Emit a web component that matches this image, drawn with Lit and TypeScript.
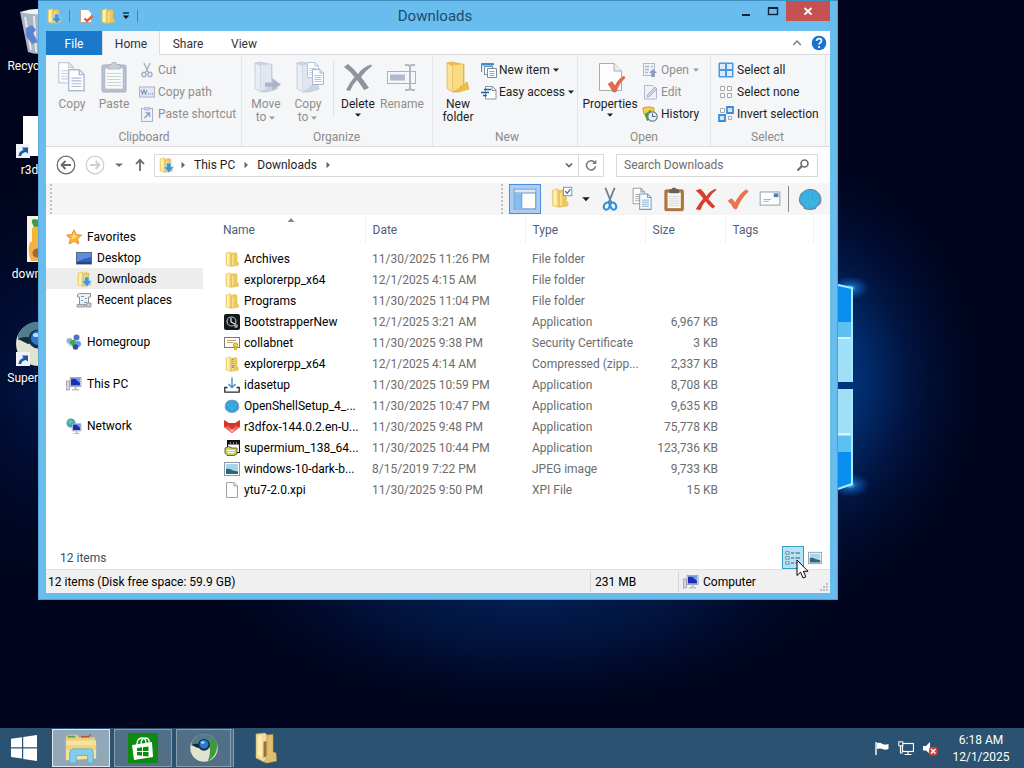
import { LitElement, html, svg, css, nothing, TemplateResult } from "lit";
import { customElement } from "lit/decorators.js";
import { classMap } from "lit/directives/class-map.js";

type Glyph = TemplateResult;

const folderShape = svg`
  <path d="M2 2 L6 .8 L7 1.6 V14.6 L6 15.4 L2 14Z" fill="#f3d877" stroke="#e3c565" stroke-width=".5"/>
  <path d="M7 2.4 L10.5 1.6 L13 2.2 V11 L14.4 11.4 V14.2 L7 15.4Z" fill="#ecc95c" stroke="#dcb750" stroke-width=".5"/>
  <path d="M3 2.6 L5.4 1.8 V14.2 L3 13.4Z" fill="#fdf1b5"/>
  <path d="M8 5 L9.6 3.2 V13.6 L8 14.4Z" fill="#f9e08a"/>`;

const openFolder = (a: string, b: string, c: string) => svg`
  <path d="M5 2 L10 1 L22 3.5 V24 L19 27 L11 30Z" fill="${b}" stroke="${c}" stroke-width=".7"/>
  <path d="M5 2 L10.5 4.5 V31 L5 27.5Z" fill="${a}" stroke="${c}" stroke-width=".7"/>
  <path d="M10.5 4.5 L21 3.2 V24 L18 25 L16 29 L10.5 31Z" fill="${a}" opacity=".75"/>
  <path d="M21 24 L25 21 L27 28 L17 31 L11 31 L17 28Z" fill="${b}" stroke="${c}" stroke-width=".7"/>`;

const sheet = (x: number, y: number, s: number, c: string) => svg`
  <g transform="translate(${x} ${y}) scale(${s})">
    <path d="M.5 .5 H8 L11.5 4 V15.5 H.5Z" fill="#fff" stroke="${c}"/>
    <path d="M8 .5 V4 H11.5" fill="none" stroke="${c}"/>
    <path d="M2.5 6.5 H9.5 M2.5 8.5 H9.5 M2.5 10.5 H9.5 M2.5 12.5 H9.5" stroke="${c}" stroke-width=".8"/>
  </g>`;

const clipboard = (board: string, edge: string, clip: string) => svg`
  <rect x="4" y="4" width="24" height="27" rx="1.5" fill="${board}" stroke="${edge}"/>
  <rect x="7" y="7" width="18" height="21" fill="#fafaf7" stroke="${edge}" stroke-width=".5"/>
  <path d="M9 12.5H23M9 15.5H23M9 18.5H23M9 21.5H23M9 24.5H23" stroke="#b9c0ca" stroke-width=".8"/>
  <path d="M10 3.5H13.5L14 1.5H18L18.5 3.5H22V8H10Z" fill="${clip}" stroke="${edge}" stroke-width=".7"/>`;

const screen = svg`
  <path d="M4 1.5 H15 V10.5 H4Z" fill="#e4e8f0" stroke="#8a94a8" stroke-width=".8"/>
  <path d="M5 2.5 H14 V9.5 H5Z" fill="#1b2fb4"/><path d="M9 2.5 H14 V7Z" fill="#7d9cf0"/>
  <path d="M8.5 10.5 H10.5 V13 H13 V14.5 H6 V13 H8.5Z" fill="#b8bfcc"/>`;

const glyphs: Record<string, { box: number; art: Glyph }> = {
  folder: { box: 16, art: folderShape },
  download: {
    box: 16,
    art: svg`${folderShape}<path d="M8.5 6H13V9.8H16L10.9 15.8L5.6 9.8H8.5Z" fill="#3d97dc" stroke="#dff0ff" stroke-width=".5"/>`,
  },
  zip: {
    box: 16,
    art: svg`${folderShape}<path d="M8.8 3V13" stroke="#a08c50" stroke-width="1.4" stroke-dasharray="1 1"/><rect x="7.8" y="9" width="2.4" height="3" fill="#8fa2b8"/>`,
  },
  propsmall: {
    box: 16,
    art: svg`<path d="M2.5 1.5H10L13.5 5V14.5H2.5Z" fill="#fff" stroke="#b0a8a4"/><path d="M6.5 10.5L9 13L14.5 8" fill="none" stroke="#e2603f" stroke-width="2.4"/>`,
  },
  copy: { box: 32, art: svg`${sheet(2, 1, 1.35, "#bcc8de")}${sheet(12, 8, 1.4, "#a3b1cf")}` },
  paste: { box: 32, art: clipboard("#aebacb", "#94a2b8", "#c2c9d4") },
  cut: {
    box: 16,
    art: svg`<path d="M5 1L9 10M11 1L7 10" stroke="#a0a8ba" stroke-width="1.5" fill="none"/><ellipse cx="5" cy="12.5" rx="2" ry="2.3" fill="none" stroke="#97a2be" stroke-width="1.4"/><ellipse cx="11" cy="12.5" rx="2" ry="2.3" fill="none" stroke="#97a2be" stroke-width="1.4"/>`,
  },
  path: {
    box: 16,
    art: svg`<rect x=".5" y="3" width="15" height="10" fill="#dfe6f4" stroke="#9daac6"/><path d="M2 6L3.5 10L5 6L6.5 10L8 6" fill="none" stroke="#7588b4" stroke-width="1.2"/><path d="M9 10H10M11 10H12M13 10H14" stroke="#7588b4" stroke-width="1.3"/>`,
  },
  shortcut: {
    box: 16,
    art: svg`<rect x="2.5" y="2.5" width="11" height="13" fill="#eef1f9" stroke="#98a5c8"/><path d="M5.5 1.5H10.5V4H5.5Z" fill="#c3cbdf" stroke="#98a5c8" stroke-width=".7"/><path d="M5.5 12L10 7.5M6.5 7H10.5V11" fill="none" stroke="#7d90be" stroke-width="1.5"/>`,
  },
  moveto: {
    box: 32,
    art: svg`${openFolder("#e6ecf6", "#c3cddf", "#b1bdd2")}<path d="M15 21.5H22V17L31 23.5L22 30V26H15Z" fill="#9eabc0" stroke="#c8d0de" stroke-width=".6"/>`,
  },
  copyto: {
    box: 32,
    art: svg`${openFolder("#e6ecf6", "#c3cddf", "#b1bdd2")}${sheet(15, 1, 1, "#aebcd4")}${sheet(20, 8, 1, "#98aacc")}`,
  },
  del: {
    box: 32,
    art: svg`<path d="M2 6L6 3Q12 8 16 13Q21 6 29 3.5L30 5Q23 10 19 16Q23 21 27 27L22 29Q19 24 15 19Q11 23 8 30L4 29Q8 21 12.5 16Q8 10 2 6Z" fill="#8d949d"/>`,
  },
  rename: {
    box: 32,
    art: svg`<rect x="1.5" y="10.5" width="28" height="12" fill="#f3f6fb" stroke="#93a9c8"/><rect x="4" y="13.5" width="15" height="6" fill="#a3b0c6"/><path d="M19 4H22.5L24 5.5L25.5 4H29M24 5V28M19 29H22.5L24 27.5L25.5 29H29" fill="none" stroke="#a6aeb7" stroke-width="2"/>`,
  },
  newfolder: { box: 32, art: openFolder("#fbe49a", "#eebf44", "#dcab3c") },
  newitem: {
    box: 16,
    art: svg`<path d="M.5 10V1.5H12.5V3" fill="#e3f1fb" stroke="#3f8fc7"/><path d="M1 2.5H12" stroke="#3f8fc7" stroke-width="2"/><rect x="3.5" y="4.5" width="8" height="8" fill="#fff" stroke="#6b8fae"/><path d="M6.5 6.5H15.5V15.5H6.5Z" fill="#fff" stroke="#7d8994"/><path d="M8.5 9.5H13.5M8.5 11.5H13.5M8.5 13.5H13.5" stroke="#93a6ba"/>`,
  },
  easy: {
    box: 16,
    art: svg`<path d="M4.5 2.5H11.5L15 6V15H4.5Z" fill="#fff" stroke="#8a949e"/><path d="M11 2.5V6.5H15" fill="none" stroke="#8a949e"/><path d="M3 5.5H10M0 8.5H8M2 11.5H6" stroke="#1d62a3" stroke-width="1.5"/>`,
  },
  properties: {
    box: 32,
    art: svg`<path d="M5.5 2.5H20L27.5 10V29.5H5.5Z" fill="#fdfdfd" stroke="#a9acb0"/><path d="M20 2.5V10H27.5" fill="#ececec" stroke="#a9acb0"/><path d="M14 23L18 20.5L21 25Q24 18 30 15L31 17Q25 22 22 31H19Q17 27 14 23Z" fill="#e46a4c" stroke="#d0583b" stroke-width=".5"/>`,
  },
  open: {
    box: 16,
    art: svg`<rect x="1.5" y="1.5" width="11" height="12" fill="#f0f3f9" stroke="#a1adc5"/><path d="M3 4.5H7M9 4.5H11M3 7.5H7M3 10.5H6" stroke="#a1adc5" stroke-width="1.5"/><path d="M11 7L15 11H12.8V15H9.2V11H7Z" fill="#7f8fb4"/>`,
  },
  edit: {
    box: 16,
    art: svg`<path d="M2.5 1.5H10.5L14.5 5.5V15H2.5Z" fill="#eef1f8" stroke="#a5b0c7"/><path d="M5 13L6 10L13 3L15 5L8 12Z" fill="#c3cde0" stroke="#8c9aba" stroke-width=".8"/>`,
  },
  history: {
    box: 16,
    art: svg`<path d="M.8 2L7 .8L12 2V8H2Z" fill="#f9cf4a" stroke="#e98f35"/><path d="M2.5 8.5L9 3.5V13L5 15Z" fill="#39a935"/><circle cx="10.5" cy="10.5" r="4.7" fill="#e8eef5" stroke="#6f7d8c" stroke-width="1.2"/><path d="M10.5 7.5V10.5H13.5" fill="none" stroke="#4a5a6c"/>`,
  },
  selall: {
    box: 16,
    art: svg`<rect x=".5" y=".5" width="15" height="15" rx="1" fill="#4a97e6"/><path d="M2 2H7V7H2ZM9 2H14V7H9ZM2 9H7V14H2ZM9 9H14V14H9Z" fill="#d9ecff"/>`,
  },
  selnone: {
    box: 16,
    art: svg`<path d="M2.5 2.5H6.5V6.5H2.5ZM9.5 2.5H13.5V6.5H9.5ZM2.5 9.5H6.5V13.5H2.5ZM9.5 9.5H13.5V13.5H9.5Z" fill="#fff" stroke="#a7a7a7"/>`,
  },
  selinv: {
    box: 16,
    art: svg`<path d="M2.5 2.5H6.5V6.5H2.5ZM10.5 10.5H13.5V13.5H10.5Z" fill="#fff" stroke="#a7a7a7"/><path d="M9 1H15V7H9ZM1 9H7V15H1Z" fill="#cfe6ff" stroke="#3c8de0" stroke-width="1.8"/>`,
  },
  panes: {
    box: 32,
    art: svg`<rect x="4.5" y="4.5" width="23" height="21" fill="#fff" stroke="#5b88bb"/><path d="M5 5H27V8H5Z" fill="#dbe8f5"/><path d="M5 8.5H27" stroke="#5b88bb"/><rect x="5" y="9" width="7" height="16" fill="#82bff0"/><path d="M12.5 9V25" stroke="#5b88bb"/>`,
  },
  selfolder: {
    box: 32,
    art: svg`<g transform="translate(3 4) scale(1.35)">${folderShape}</g><rect x="17.5" y="3.5" width="9" height="9" fill="#fff" stroke="#7c8db0"/><path d="M19.5 7.5L21.5 10L25 5.5" fill="none" stroke="#3d5ea8" stroke-width="1.3"/>`,
  },
  tcut: {
    box: 32,
    art: svg`<path d="M11 4L17.5 20M21 4L14.5 20" stroke="#6f8091" stroke-width="2"/><ellipse cx="12.5" cy="23.5" rx="3" ry="4" transform="rotate(25 12.5 23.5)" fill="none" stroke="#2f8fd8" stroke-width="2.2"/><ellipse cx="19.5" cy="23.5" rx="3" ry="4" transform="rotate(-25 19.5 23.5)" fill="none" stroke="#2f8fd8" stroke-width="2.2"/>`,
  },
  tcopy: { box: 32, art: svg`${sheet(6, 4, 1.1, "#9ba3ab")}${sheet(13, 10, 1.1, "#6f9cc4")}` },
  tpaste: {
    box: 32,
    art: svg`<g transform="translate(3 3) scale(.82)">${clipboard("#b97b3c", "#8d5a26", "#5d646c")}</g>`,
  },
  tdel: {
    box: 32,
    art: svg`<path d="M5 7L10 5Q14 8.5 16.5 13Q20 7 26.5 5L27 6.5Q21 11 18.5 16Q22 20 26 24L23 26Q18 22 15.5 18.5Q12 22 10 28L5 27Q9 20 13 15.5Q10 11 5 7Z" fill="#d8402e"/>`,
  },
  tcheck: {
    box: 32,
    art: svg`<path d="M5.5 18L9 15.5L13 20Q18 10 24.5 6L27 8Q19 15 14.5 26.5H12Q9.5 21 5.5 18Z" fill="#ee7548" stroke="#d65c33" stroke-width=".6"/>`,
  },
  tmail: {
    box: 32,
    art: svg`<rect x="5.5" y="8.5" width="21" height="14" fill="#fdfdfd" stroke="#8d9aa8"/><rect x="20" y="10" width="5" height="4" fill="#4b7fc4"/><path d="M9 16.5H17M9 18.5H15" stroke="#9db3cc"/>`,
  },
  shell: {
    box: 32,
    art: svg`<path d="M10 26Q10 23 7 22Q4 19 5 15Q5.5 11 9 8.5Q12 5.5 16 6Q21 5.5 24 9Q27.5 12 27.5 16Q28 20 25 22.5Q22 23 22 26Q16 28 10 26Z" fill="#36afe0" stroke="#6f8798" stroke-width="1.2"/><path d="M16 24V8M14 24L10 11M18 24L22 11M13 24L7.5 16M19 24L25 16" stroke="#4cb9e6" stroke-width=".8"/>`,
  },
  star: {
    box: 16,
    art: svg`<path d="M8 .8L10.2 5.6L15.5 6.2L11.6 9.8L12.8 15L8 12.3L3.2 15L4.4 9.8L.5 6.2L5.8 5.6Z" fill="#fdb338" stroke="#e2852a" stroke-width=".9"/><path d="M8 3L9.2 7L12 7.5L8.5 9L5.5 10.5L6.5 8L5 7L7 6.5Z" fill="#ffdf80"/>`,
  },
  desktop: {
    box: 16,
    art: svg`<rect x=".5" y="2.5" width="15" height="11.5" fill="#2f5fc0" stroke="#5a6884"/><path d="M1 3H15V7Q8 8 1 12Z" fill="#5d8be0"/><path d="M1 13H15" stroke="#26385e" stroke-width="1.5"/>`,
  },
  recent: {
    box: 16,
    art: svg`<path d="M3.5 1.5H14.5V5H12.5V13H3.5V5H1.5V2.5Z" fill="#eef0f2" stroke="#8a929a"/><path d="M5 4.5H8M9 6.5H11M5 8.5H7M8 10.5H11" stroke="#6f98b8" stroke-width="1.2"/><path d="M1 12.5H9V15H1ZM11 11H15V15H10Z" fill="#c9ced4" stroke="#8a929a" stroke-width=".8"/>`,
  },
  homegroup: {
    box: 16,
    art: svg`<circle cx="10.5" cy="3.5" r="3" fill="#4b74c9"/><circle cx="3.5" cy="7" r="3" fill="#8fb3d6"/><circle cx="7" cy="9" r="3.2" fill="#4aa84a"/><circle cx="12" cy="10" r="3" fill="#5f9be8"/><circle cx="9.5" cy="13" r="2.8" fill="#2b4fa8"/><path d="M1 8L6 11L4 13Z" fill="#b3d6ef"/>`,
  },
  pc: {
    box: 16,
    art: svg`<rect x=".5" y="5" width="2.8" height="9" fill="#d5dae2" stroke="#8a94a8" stroke-width=".7"/>${screen}`,
  },
  network: {
    box: 16,
    art: svg`<circle cx="5" cy="5" r="4.5" fill="#3fa3c9"/><path d="M2 3Q5 1 7 3Q6 6 3 6Z" fill="#6fc96a"/><g transform="translate(3 4.5) scale(.8)">${screen}</g>`,
  },
  boot: {
    box: 16,
    art: svg`<rect width="16" height="16" rx="2" fill="#15181b"/><circle cx="7.5" cy="7.5" r="4.5" fill="none" stroke="#b8bec4" stroke-width="1.2"/><path d="M7 4V8L11 10" fill="none" stroke="#eee" stroke-width="1.2"/><circle cx="12" cy="12" r="2" fill="#9aa0a6"/>`,
  },
  cert: {
    box: 16,
    art: svg`<rect x=".5" y="2.5" width="15" height="10" fill="#fff" stroke="#7d7a66"/><path d="M3 5.5H12M3 7.5H9" stroke="#c9a06c"/><circle cx="11.5" cy="10" r="2.2" fill="#f2cf45" stroke="#a98a1c" stroke-width=".7"/><path d="M10 12V15.5L11.5 14.5L13 15.5V12" fill="#d9b02c"/>`,
  },
  ida: {
    box: 16,
    art: svg`<path d="M3.5 10.5H.8V15.2H15.2V10.5H12.5" fill="none" stroke="#2a2a2a" stroke-width="1.3"/><path d="M8 .5V10M4.5 7L8 10.5L11.5 7" fill="none" stroke="#3b8fd0" stroke-width="1.4"/>`,
  },
  shellsm: {
    box: 16,
    art: svg`<path d="M4.5 14Q4 12.5 2 12Q.5 9 1.5 6Q3 2 8 2Q13 2 14.5 6Q15.5 9.5 14 12Q12 12.5 11.5 14Q8 15 4.5 14Z" fill="#2fa4dc" stroke="#7d97a8" stroke-width=".8"/><path d="M8 12V4M7 12L4 6M9 12L12 6" stroke="#55bce8" stroke-width=".7"/>`,
  },
  fox: {
    box: 16,
    art: svg`<path d="M0 1L5 4H11L16 1V8L8 14L0 8Z" fill="#d8332a"/><path d="M0 8L4 7L8 10L12 7L16 8L8 14Z" fill="#ee6a55"/><path d="M5 9.5L8 11.5L11 9.5L8 13Z" fill="#fff"/>`,
  },
  super: {
    box: 16,
    art: svg`<rect x="3.5" y=".5" width="12" height="12" fill="#fff" stroke="#111"/><path d="M4 1H15V4.5H4Z" fill="#111"/><path d="M6 3H7M9 3H10M12 3H13" stroke="#fff"/><path d="M1 8Q5 5 8 8L13 8V14L10 15.5H3L1 13Z" fill="#c9d44a" stroke="#444" stroke-width=".8"/><path d="M3 10.5H11M4 12.5H10" stroke="#fff"/>`,
  },
  jpeg: {
    box: 16,
    art: svg`<rect x=".5" y="1.5" width="15" height="13" fill="#fff" stroke="#8d9aa5"/><path d="M2 3H14V13H2Z" fill="#a8d4ee"/><path d="M2 8Q6 7 9 9.5L14 10.5V13H2Z" fill="#2f6578"/>`,
  },
  file: {
    box: 16,
    art: svg`<path d="M2.5 .5H10L13.5 4V15.5H2.5Z" fill="#fdfdfd" stroke="#a2a2a2"/><path d="M10 .5V4H13.5" fill="none" stroke="#a2a2a2"/>`,
  },
  lines: {
    box: 16,
    art: svg`<path d="M.8 1.8H4.2V4.2H.8ZM.8 6.8H4.2V9.2H.8ZM.8 11.8H4.2V14.2H.8Z" fill="#fff" stroke="#4c7d96" stroke-width=".9"/><path d="M6 3H9M10.5 3H15M6 8H9M10.5 8H15M6 13H9M10.5 13H15" stroke="#456"/>`,
  },
  back: {
    box: 20,
    art: svg`<circle cx="10" cy="10" r="8.8" fill="#fff" stroke="#6d6d6d" stroke-width="1.3"/><path d="M15 10H6M9.5 6L5.5 10L9.5 14" fill="none" stroke="#6a6a6a" stroke-width="1.8"/>`,
  },
  forward: {
    box: 20,
    art: svg`<circle cx="10" cy="10" r="8.8" fill="#fff" stroke="#cfcfcf" stroke-width="1.3"/><path d="M5 10H14M10.5 6L14.5 10L10.5 14" fill="none" stroke="#cfcfcf" stroke-width="1.8"/>`,
  },
  up: { box: 16, art: svg`<path d="M8 14V3M4 7L8 2.8L12 7" fill="none" stroke="#6a6a6a" stroke-width="1.8"/>` },
  tri: { box: 8, art: svg`<path d="M1 2.5H7L4 5.8Z" fill="currentColor"/>` },
  trigray: { box: 8, art: svg`<path d="M0 2.5H8L4 6Z" fill="#707070"/>` },
  triright: { box: 8, art: svg`<path d="M2.5 .8L6 4L2.5 7.2Z" fill="#666"/>` },
  triup: { box: 8, art: svg`<path d="M.5 6L4 2L7.5 6Z" fill="#7e8894"/>` },
  chevdown: { box: 10, art: svg`<path d="M2 3.5L5 6.5L8 3.5" fill="none" stroke="#666" stroke-width="1.7"/>` },
  chevup: { box: 10, art: svg`<path d="M1.2 7L5 3L8.8 7" fill="none" stroke="#7b7b7b" stroke-width="1.5"/>` },
  help: {
    box: 16,
    art: svg`<circle cx="8" cy="8" r="7.3" fill="#1a72cf"/><path d="M5.6 6Q5.6 3.7 8 3.7Q10.5 3.7 10.5 5.8Q10.5 7 9 7.9Q8.1 8.5 8.1 9.6" fill="none" stroke="#fff" stroke-width="1.7"/><circle cx="8.1" cy="12" r="1.1" fill="#fff"/>`,
  },
  refresh: {
    box: 14,
    art: svg`<path d="M11.2 5.2A4.6 4.6 0 1 0 11.6 8.2" fill="none" stroke="#777" stroke-width="1.5"/><path d="M12.3 1.8V6H8.2Z" fill="#777"/>`,
  },
  magnify: {
    box: 14,
    art: svg`<circle cx="8.5" cy="5.5" r="3.5" fill="none" stroke="#6b6b6b" stroke-width="1.6"/><path d="M6 8L1.5 12.5" stroke="#6b6b6b" stroke-width="2"/>`,
  },
  bin: {
    box: 48,
    art: svg`<path d="M6 4L42 2L36 44Q24 48 14 44Z" fill="#c8d3df" opacity=".85"/><path d="M6 4Q24 -2 42 3Q26 9 6 4Z" fill="#f1f4f8"/><path d="M11 9L17 42M20 8L22 44" stroke="#fff" stroke-width="2" opacity=".7"/><path d="M12 20L18 17L22 22L19 25L24 34L18 36L12 28Z" fill="#5b83d0"/>`,
  },
  page: { box: 48, art: svg`<path d="M9 4H40V44H9Z" fill="#fff"/>` },
  picture: {
    box: 48,
    art: svg`<path d="M13 0H44V46H13Z" fill="#fbf4e2"/><path d="M19 9Q16 4 20 3Q25 4 28 3V11H20Z" fill="#3f9a4e"/><path d="M18 12Q22 9 30 12V28H18Z" fill="#f2b733"/><path d="M16 26H30V45H17Q13 34 16 26Z" fill="#f3b24b"/><circle cx="23" cy="37" r="4.5" fill="#a06a3a"/>`,
  },
  chromium: {
    box: 48,
    art: svg`<circle cx="24" cy="24" r="22" fill="#dfe3cf"/><path d="M4 15Q12 0 28 2Q44 6 46 22H28Q20 14 4 20Z" fill="#507d8b"/><path d="M4 19Q15 14 22 22L14 24Z" fill="#16283c"/><path d="M32 8L43 13Q50 32 30 46Q36 30 32 20Z" fill="#3f9a3c"/><circle cx="24" cy="19" r="9.5" fill="#14304f"/><circle cx="24" cy="18" r="7" fill="#2c78cf"/><ellipse cx="22" cy="15" rx="3" ry="2" fill="#b9dcff"/>`,
  },
  overlay: {
    box: 14,
    art: svg`<rect width="14" height="14" fill="#eef3f8"/><path d="M2.5 12Q3 7 7.5 6L6 3.5H12V9.5L9.8 8Q6 8.5 5 12Z" fill="#1f55a3"/>`,
  },
  winlogo: {
    box: 28,
    art: svg`<path d="M1 4.8L12 3.2V13.3H1ZM13.2 3L27 1V13.3H13.2ZM1 14.5H12V24.6L1 23ZM13.2 14.5H27V27L13.2 25Z" fill="#fff"/>`,
  },
  explorer: {
    box: 36,
    art: svg`<path d="M2 6L5 4H14L16 7H33V12H2Z" fill="#e9cf7d"/><path d="M4 6H12" stroke="#57a04f" stroke-width="2"/><path d="M18 6H26L28 4" stroke="#c84f3a" stroke-width="1.5" fill="none"/><path d="M2 10H34V29L2 31Z" fill="#f7e3a0"/><path d="M2 15H34V20H2Z" fill="#f2d27a"/><path d="M6 34V23Q6 19 10 19H28Q31 19 31 23V34H25V26H13V34Z" fill="#86cdea" stroke="#5fb0d6"/>`,
  },
  store: {
    box: 30,
    art: svg`<path d="M0 0H30V30H0Z" fill="#0c8a12"/><path d="M4 12L24 9L25 24L6 27Z" fill="#fff"/><path d="M9 12Q9 5 14 5Q18 5 18 10M13 11Q13 5 18 5Q22 6 21 10" fill="none" stroke="#fff" stroke-width="1.3"/><path d="M9 15L14 14.3V18H9ZM15 14.2L20.5 13.5V18H15ZM9 19H14V22.8L9 22.3ZM15 19H20.5V23.5L15 23Z" fill="#0c8a12"/>`,
  },
  taskfolder: {
    box: 32,
    art: svg`<path d="M5 2L14 1L16 3V29L13 30L5 26Z" fill="#f3dc9a" stroke="#c9a55c" stroke-width=".6"/><path d="M16 3L22 2.5V20L25 21L25.5 29L16 31L13 30L16 25Z" fill="#e2bf70" stroke="#c39c50" stroke-width=".6"/><path d="M12.5 10L15.5 9V24L12.5 26Z" fill="#96733a"/><path d="M7 4L11 3V25L7 24Z" fill="#fbeab4"/>`,
  },
  flag: {
    box: 16,
    art: svg`<path d="M2 2V15" stroke="#fff" stroke-width="1.4"/><path d="M3 3Q6 2 8.5 4Q11 5 14.5 4V9Q11 10.5 8.5 9Q6 8 3 9Z" fill="#fff"/>`,
  },
  traynet: {
    box: 16,
    art: svg`<rect x="4.5" y="3.5" width="11" height="8" fill="none" stroke="#fff" stroke-width="1.2"/><path d="M10 12V14M6.5 14.5H13.5M2.5 6V13H5" stroke="#fff" stroke-width="1.2" fill="none"/><rect x=".8" y="1.8" width="4" height="4" fill="#2b5270" stroke="#fff"/>`,
  },
  volume: {
    box: 16,
    art: svg`<path d="M1 6H4L8 2V14L4 10.5H1Z" fill="#fff"/><rect x="7" y="7" width="8.5" height="8.5" rx="3" fill="#d9402f"/><path d="M9 9L13.5 13.5M13.5 9L9 13.5" stroke="#fff" stroke-width="1.4"/>`,
  },
};

const icon = (name: string, size = 16) => {
  const g = glyphs[name];
  return html`<svg class="ico" width=${size} height=${size} viewBox="0 0 ${g.box} ${g.box}" aria-hidden="true">${g.art}</svg>`;
};

interface Row {
  icon: string;
  name: string;
  date: string;
  type: string;
  size: string;
}

const rows: Row[] = [
  { icon: "folder", name: "Archives", date: "11/30/2025 11:26 PM", type: "File folder", size: "" },
  { icon: "folder", name: "explorerpp_x64", date: "12/1/2025 4:15 AM", type: "File folder", size: "" },
  { icon: "folder", name: "Programs", date: "11/30/2025 11:04 PM", type: "File folder", size: "" },
  { icon: "boot", name: "BootstrapperNew", date: "12/1/2025 3:21 AM", type: "Application", size: "6,967 KB" },
  { icon: "cert", name: "collabnet", date: "11/30/2025 9:38 PM", type: "Security Certificate", size: "3 KB" },
  { icon: "zip", name: "explorerpp_x64", date: "12/1/2025 4:14 AM", type: "Compressed (zipp...", size: "2,337 KB" },
  { icon: "ida", name: "idasetup", date: "11/30/2025 10:59 PM", type: "Application", size: "8,708 KB" },
  { icon: "shellsm", name: "OpenShellSetup_4_...", date: "11/30/2025 10:47 PM", type: "Application", size: "9,635 KB" },
  { icon: "fox", name: "r3dfox-144.0.2.en-U...", date: "11/30/2025 9:48 PM", type: "Application", size: "75,778 KB" },
  { icon: "super", name: "supermium_138_64...", date: "11/30/2025 10:44 PM", type: "Application", size: "123,736 KB" },
  { icon: "jpeg", name: "windows-10-dark-b...", date: "8/15/2019 7:22 PM", type: "JPEG image", size: "9,733 KB" },
  { icon: "file", name: "ytu7-2.0.xpi", date: "11/30/2025 9:50 PM", type: "XPI File", size: "15 KB" },
];

const base = css`
  :host {
    font-family: Roboto, "Open Sans", "Noto Sans", sans-serif;
    font-size: 12px;
    line-height: 16px;
    color: #1e1e1e;
  }
  * { box-sizing: border-box; }
  button, input {
    font: inherit;
    color: inherit;
    border: 0;
    padding: 0;
    margin: 0;
    background: none;
  }
  button { white-space: nowrap; }
  .ico { display: block; flex: none; }
`;

@customElement("explorer-ribbon")
export class ExplorerRibbon extends LitElement {
  static styles = [
    base,
    css`
      :host { display: block; background: #f5f6f7; border-bottom: 1px solid #dadbdc; }
      .tabs { display: flex; height: 24px; background: #fff; border-bottom: 1px solid #dadbdc; }
      .tab { padding: 2px 0 0; width: 56px; height: 24px; color: #333; }
      .file { background: #1979ca; color: #fff; }
      .active { width: 58px; background: #f5f6f7; border: 1px solid #dadbdc; border-width: 0 1px; }
      .fill { flex: 1; }
      .tools { display: flex; align-items: center; gap: 9px; padding-right: 3px; }
      .groups { display: flex; height: 91px; }
      .group {
        display: grid;
        grid-template-rows: 1fr 16px;
        padding: 4px 4px 1px;
        border-right: 1px solid #e4e5e6;
      }
      .clip { width: 196px; padding-left: 5px; }
      .org { width: 191px; padding-left: 3px; }
      .new { width: 145px; padding-right: 0; }
      .opn { width: 133px; }
      .sel { width: 115px; padding-left: 3px; }
      .name { text-align: center; color: #8a8a8a; }
      .body { display: flex; }
      .big {
        display: flex;
        flex-direction: column;
        align-items: center;
        width: 42px;
        padding-top: 2px;
        line-height: 13px;
      }
      .big span { display: flex; align-items: center; gap: 2px; }
      .big .ico + span { margin-top: 5px; }
      .wide { width: 56px; }
      .mid { width: 46px; }
      .off { color: #8e8e8e; }
      .off .ico { opacity: .85; }
      .list { display: flex; flex-direction: column; padding-left: 4px; }
      .new .list { padding-left: 2px; }
      .small { display: flex; align-items: center; gap: 3px; height: 22px; }
      .new .small { gap: 2px; }
      .line { width: 1px; height: 56px; background: #e1e2e3; margin: 2px 3px 0 4px; }
    `,
  ];

  private big(ico: string, lines: string[], off = false, menu = false, size = "") {
    return html`<button class=${classMap({ big: true, off, wide: size === "wide", mid: size === "mid" })}>
      ${icon(ico, 32)}
      ${lines.map((l, i) => html`<span>${l}${menu && lines.length > 1 && i === 1 ? icon("tri", 8) : nothing}</span>`)}
      ${menu && lines.length === 1 ? html`<span>${icon("tri", 8)}</span>` : nothing}
    </button>`;
  }

  private small(ico: string, label: string, off = false, menu = false) {
    return html`<button class=${classMap({ small: true, off })}>${icon(ico)}<span>${label}</span>${menu ? icon("tri", 8) : nothing}</button>`;
  }

  render() {
    return html`
      <div class="tabs">
        <button class="tab file">File</button>
        <button class="tab active">Home</button>
        <button class="tab">Share</button>
        <button class="tab">View</button>
        <span class="fill"></span>
        <div class="tools">
          <button aria-label="Collapse ribbon">${icon("chevup", 10)}</button>
          <button aria-label="Help">${icon("help")}</button>
        </div>
      </div>
      <div class="groups">
        <section class="group clip">
          <div class="body">
            ${this.big("copy", ["Copy"], true)}${this.big("paste", ["Paste"], true)}
            <div class="list">
              ${this.small("cut", "Cut", true)}${this.small("path", "Copy path", true)}${this.small("shortcut", "Paste shortcut", true)}
            </div>
          </div>
          <div class="name">Clipboard</div>
        </section>
        <section class="group org">
          <div class="body">
            ${this.big("moveto", ["Move", "to"], true, true)}${this.big("copyto", ["Copy", "to"], true, true)}
            <i class="line"></i>
            ${this.big("del", ["Delete"], false, true)}${this.big("rename", ["Rename"], true, false, "mid")}
          </div>
          <div class="name">Organize</div>
        </section>
        <section class="group new">
          <div class="body">
            ${this.big("newfolder", ["New", "folder"])}
            <div class="list">
              ${this.small("newitem", "New item", false, true)}${this.small("easy", "Easy access", false, true)}
            </div>
          </div>
          <div class="name">New</div>
        </section>
        <section class="group opn">
          <div class="body">
            ${this.big("properties", ["Properties"], false, true, "wide")}
            <div class="list">
              ${this.small("open", "Open", true, true)}${this.small("edit", "Edit", true)}${this.small("history", "History")}
            </div>
          </div>
          <div class="name">Open</div>
        </section>
        <section class="group sel">
          <div class="body">
            <div class="list">
              ${this.small("selall", "Select all")}${this.small("selnone", "Select none")}${this.small("selinv", "Invert selection")}
            </div>
          </div>
          <div class="name">Select</div>
        </section>
      </div>
    `;
  }
}

@customElement("explorer-window")
export class ExplorerWindow extends LitElement {
  static styles = [
    base,
    css`
      :host {
        display: flex;
        flex-direction: column;
        padding: 0 8px 7px;
        background: #69bdee;
        border-top: 1px solid #3e8fc0;
        box-shadow: inset 1px 0 #5aa9d8, inset -1px -1px #4c9fd0;
      }
      .title {
        display: grid;
        grid-template-columns: 1fr auto 1fr;
        height: 30px;
        padding-right: 1px;
        margin-right: -1px;
        flex: none;
      }
      .quick { display: flex; align-items: center; gap: 6px; }
      .quick i { width: 1px; height: 12px; background: #3f86b3; margin: 0 2px 0 1px; }
      .caption { font-size: 15px; line-height: 30px; color: #1b4a6b; font-weight: 400; margin: 0 6px 0 0; }
      .controls { display: flex; justify-content: flex-end; align-items: flex-start; }
      .controls button { display: grid; place-items: center; width: 27px; height: 20px; }
      .controls .close { width: 44px; background: #c75050; }
      .client { display: flex; flex-direction: column; flex: 1; min-height: 0; background: #fff; }
      .nav { display: flex; align-items: center; height: 36px; padding: 0 12px 0 10px; flex: none; }
      .nav > button { display: grid; place-items: center; width: 20px; height: 20px; margin-right: 9px; }
      .nav > .hist { width: 10px; margin-right: 8px; }
      .nav > .upper { width: 16px; margin-right: 6px; }
      .addr { display: flex; flex: 1; height: 23px; border: 1px solid #d9d9d9; align-items: center; padding-left: 3px; }
      .addr button { display: grid; place-items: center; height: 21px; margin-right: 7px; }
      .addr .ico + button { margin-left: 5px; }
      .addr .stretch { flex: 1; }
      .addr .chev { width: 18px; margin: 0; }
      .addr .reload { width: 25px; margin: 0; border-left: 1px solid #d9d9d9; }
      .search { display: flex; align-items: center; width: 202px; height: 23px; margin-left: 12px; padding: 0 7px; border: 1px solid #d9d9d9; }
      .search input { flex: 1; min-width: 0; outline: 0; }
      .search input::placeholder { color: #6d6d6d; opacity: 1; }
      .bar { display: flex; align-items: center; height: 32px; background: #f5f5f5; padding: 0 4px; flex: none; }
      .bar button { width: 32px; height: 30px; display: grid; place-items: center; }
      .bar .on { background: #a9cdf4; border: 1px solid #4a90d9; margin-right: 5px; }
      .bar .drop { width: 16px; }
      .grip { width: 2px; height: 30px; margin: 0 6px 0 0; background: repeating-linear-gradient(#c0c0c0 0 2px, #f5f5f5 2px 4px); }
      .bar .fill { flex: 1; }
      .split { width: 1px; height: 26px; background: #8a8a8a; margin: 0 5px 0 2px; }
      .main { display: flex; flex: 1; min-height: 0; padding-top: 1px; }
      .tree { width: 157px; margin-right: 13px; padding-top: 10px; flex: none; display: flex; flex-direction: column; }
      .node { display: flex; align-items: center; gap: 5px; height: 21px; padding-left: 20px; flex: none; color: #000; }
      .child { padding-left: 30px; }
      .picked { background: #ededed; }
      .gap { margin-top: 21px; }
      .files { flex: 1; min-width: 0; overflow: hidden; }
      table { width: 100%; table-layout: fixed; border-collapse: collapse; }
      th, td { padding: 0 7px; font-weight: 400; text-align: left; white-space: nowrap; }
      th { position: relative; height: 27px; color: #4c607a; border-right: 1px solid #f0f0f0; }
      th:last-child { border: 0; }
      .sort { position: absolute; top: 0; left: 71px; }
      .space td { height: 5px; }
      td { height: 21px; color: #6d6d6d; }
      .cell { display: flex; align-items: center; gap: 4px; color: #000; padding-left: 1px; }
      td.num { text-align: right; }
      .c1 { width: 149px; }
      .c2 { width: 160px; }
      .c3 { width: 120px; }
      .c4 { width: 80px; }
      .c5 { width: 88px; }
      .details { display: flex; align-items: center; justify-content: space-between; height: 23px; padding: 0 4px 0 14px; flex: none; color: #33506b; }
      .views { display: flex; }
      .views button { position: relative; display: grid; place-items: center; width: 22px; height: 23px; }
      .views .on { background: #b5e2f5; border: 1px solid #3c9cc6; }
      .cursor { position: absolute; left: 13px; top: 12px; z-index: 2; }
      .status { display: flex; height: 24px; align-items: center; background: #f0f0f0; border-top: 1px solid #dfdfdf; flex: none; color: #000; }
      .status span { display: flex; align-items: center; gap: 4px; height: 20px; padding-left: 4px; border-left: 1px solid #d5d5d5; }
      .status .s1 { flex: 1; border: 0; padding-left: 2px; }
      .status .s2 { width: 88px; }
      .status .s3 { width: 152px; }
      .size { align-self: flex-end; display: block; margin-left: -12px; }
    `,
  ];

  render() {
    return html`
      <header class="title">
        <div class="quick">
          ${icon("download")}<i></i>
          <button aria-label="Properties">${icon("propsmall")}</button>
          <button aria-label="New folder">${icon("folder")}</button>
          <button aria-label="Customize">
            <svg class="ico" width="8" height="8" viewBox="0 0 8 8"><path d="M1 1H7" stroke="#111" stroke-width="1.2" /><path d="M.8 3.5H7.2L4 7Z" fill="#111" /></svg>
          </button>
          <i></i>
        </div>
        <h1 class="caption">Downloads</h1>
        <div class="controls">
          <button aria-label="Minimize"><svg class="ico" width="12" height="12" viewBox="0 0 12 12"><path d="M2 10H10" stroke="#123" stroke-width="2" /></svg></button>
          <button aria-label="Maximize"><svg class="ico" width="12" height="12" viewBox="0 0 12 12"><rect x="1.5" y="3" width="9" height="6.5" fill="none" stroke="#123" stroke-width="1.4" /><path d="M1 3H11" stroke="#123" stroke-width="2" /></svg></button>
          <button class="close" aria-label="Close"><svg class="ico" width="10" height="10" viewBox="0 0 10 10"><path d="M1.5 2L8.5 8.5M8.5 2L1.5 8.5" stroke="#fff" stroke-width="1.8" /></svg></button>
        </div>
      </header>
      <div class="client">
        <explorer-ribbon></explorer-ribbon>
        <nav class="nav">
          <button aria-label="Back">${icon("back", 20)}</button>
          <button aria-label="Forward">${icon("forward", 20)}</button>
          <button class="hist" aria-label="Recent locations">${icon("trigray", 8)}</button>
          <button class="upper" aria-label="Up">${icon("up")}</button>
          <div class="addr">
            ${icon("download")}
            <button aria-label="Root">${icon("triright", 8)}</button>
            <button>This PC</button>
            <button aria-label="This PC items">${icon("triright", 8)}</button>
            <button>Downloads</button>
            <button aria-label="Downloads items">${icon("triright", 8)}</button>
            <span class="stretch"></span>
            <button class="chev" aria-label="Previous locations">${icon("chevdown", 10)}</button>
            <button class="reload" aria-label="Refresh">${icon("refresh", 14)}</button>
          </div>
          <label class="search">
            <input type="text" aria-label="Search Downloads" placeholder="Search Downloads" />
            ${icon("magnify", 14)}
          </label>
        </nav>
        <div class="bar">
          <i class="grip"></i>
          <span class="fill"></span>
          <i class="grip"></i>
          <button class="on" aria-label="Navigation pane">${icon("panes", 30)}</button>
          <button aria-label="Select">${icon("selfolder", 30)}</button>
          <button class="drop" aria-label="More">${icon("tri", 10)}</button>
          <button aria-label="Cut">${icon("tcut", 30)}</button>
          <button aria-label="Copy">${icon("tcopy", 30)}</button>
          <button aria-label="Paste">${icon("tpaste", 30)}</button>
          <button aria-label="Delete">${icon("tdel", 30)}</button>
          <button aria-label="Properties">${icon("tcheck", 30)}</button>
          <button aria-label="Mail">${icon("tmail", 30)}</button>
          <i class="split"></i>
          <button aria-label="Shell settings">${icon("shell", 30)}</button>
        </div>
        <div class="main">
          <div class="tree">
            <button class="node">${icon("star")}Favorites</button>
            <button class="node child">${icon("desktop")}Desktop</button>
            <button class="node child picked">${icon("download")}Downloads</button>
            <button class="node child">${icon("recent")}Recent places</button>
            <button class="node gap">${icon("homegroup")}Homegroup</button>
            <button class="node gap">${icon("pc")}This PC</button>
            <button class="node gap">${icon("network")}Network</button>
          </div>
          <div class="files">
            <table>
              <colgroup>
                <col class="c1" /><col class="c2" /><col class="c3" /><col class="c4" /><col class="c5" /><col />
              </colgroup>
              <thead>
                <tr>
                  <th><svg class="sort" width="8" height="8" viewBox="0 0 8 8">${glyphs.triup.art}</svg>Name</th>
                  <th>Date</th><th>Type</th><th>Size</th><th>Tags</th><th></th>
                </tr>
              </thead>
              <tbody>
                <tr class="space"><td colspan="6"></td></tr>
                ${rows.map(
                  (r) => html`<tr>
                    <td><div class="cell">${icon(r.icon)}${r.name}</div></td>
                    <td>${r.date}</td><td>${r.type}</td><td class="num">${r.size}</td><td></td><td></td>
                  </tr>`,
                )}
              </tbody>
            </table>
          </div>
        </div>
        <div class="details">
          <span>12 items</span>
          <div class="views">
            <button class="on" aria-label="Details view">
              ${icon("lines")}
              <svg class="cursor" width="14" height="22" viewBox="0 0 14 22"><path d="M1 1V16.5L4.6 13.2L7 19L9.8 17.8L7.4 12.3H12Z" fill="#fff" stroke="#000" /></svg>
            </button>
            <button aria-label="Thumbnail view">${icon("jpeg", 14)}</button>
          </div>
        </div>
        <footer class="status">
          <span class="s1">12 items (Disk free space: 59.9 GB)</span>
          <span class="s2">231 MB</span>
          <span class="s3">${icon("pc")}Computer</span>
          <svg class="size" width="12" height="12" viewBox="0 0 12 12"><path d="M8 2H10V4H8ZM8 5H10V7H8ZM8 8H10V10H8ZM5 5H7V7H5ZM5 8H7V10H5ZM2 8H4V10H2Z" fill="#bdbdbd" /></svg>
        </footer>
      </div>
    `;
  }
}

@customElement("app-root")
export class AppRoot extends LitElement {
  static styles = [
    base,
    css`
      :host { display: flex; flex-direction: column; height: 100vh; overflow: hidden; background: #00041c; }
      .desk { position: relative; flex: 1; min-height: 0; overflow: hidden; }
      .wall { position: absolute; inset: 0; width: 100%; height: 100%; }
      .icons { position: relative; width: 76px; }
      .item {
        position: relative;
        display: flex;
        flex-direction: column;
        align-items: center;
        gap: 2px;
        height: 104px;
        padding-top: 8px;
        color: #fff;
        text-decoration: none;
        text-shadow: 0 1px 2px #000;
      }
      .mark { position: absolute; left: 16px; top: 40px; }
      .win { position: absolute; left: 38px; right: 186px; top: 0; bottom: 128px; }
      .task { display: flex; align-items: center; height: 40px; flex: none; background: #2b5270; color: #fff; }
      .task button { display: grid; place-items: center; width: 58px; height: 38px; margin-right: 4px; }
      .task .start { width: 48px; }
      .task .app { background: #526f88; border: 1px solid #8a9eaf; }
      .task .live { background: #92a7b7; border-color: #e0e8ee; }
      .task .stack { border-right: 4px double #8a9eaf; }
      .fill { flex: 1; }
      .tray { display: flex; align-items: center; gap: 8px; margin-right: 4px; }
      .clock { width: 78px; padding-top: 2px; text-align: center; line-height: 17px; margin-right: 4px; }
    `,
  ];

  render() {
    return html`
      <main class="desk">
        <svg class="wall" viewBox="0 0 1024 728" preserveAspectRatio="xMidYMid slice" aria-hidden="true">
          <defs>
            <radialGradient id="glow" gradientUnits="userSpaceOnUse" cx="0" cy="0" r="1" gradientTransform="translate(800 380) scale(200 240)">
              <stop offset="0" stop-color="#04459c" /><stop offset=".3" stop-color="#022e70" /><stop offset=".55" stop-color="#011440" /><stop offset="1" stop-color="#00061f" stop-opacity="0" />
            </radialGradient>
            <radialGradient id="low" gradientUnits="userSpaceOnUse" cx="0" cy="0" r="1" gradientTransform="translate(530 570) scale(360 160)">
              <stop offset="0" stop-color="#01245e" /><stop offset=".5" stop-color="#01123a" /><stop offset="1" stop-color="#00041c" stop-opacity="0" />
            </radialGradient>
            <radialGradient id="left" gradientUnits="userSpaceOnUse" cx="0" cy="0" r="1" gradientTransform="translate(60 380) scale(200 260)">
              <stop offset="0" stop-color="#01194e" /><stop offset="1" stop-color="#00041c" stop-opacity="0" />
            </radialGradient>
            <radialGradient id="spark"><stop offset="0" stop-color="#9be4ff" /><stop offset=".3" stop-color="#1583e8" stop-opacity=".6" /><stop offset="1" stop-color="#0560c8" stop-opacity="0" /></radialGradient>
          </defs>
          <rect width="1024" height="728" fill="#00041c" />
          <rect width="1024" height="728" fill="url(#left)" />
          <rect width="1024" height="728" fill="url(#low)" />
          <rect width="1024" height="728" fill="url(#glow)" />
          <ellipse cx="850" cy="288" rx="20" ry="12" fill="url(#spark)" />
          <ellipse cx="850" cy="485" rx="20" ry="12" fill="url(#spark)" />
          <path d="M780 270L852 287V382H780ZM780 389H852V485L780 502Z" fill="#0c8df0" />
          <path d="M780 322H851V337H780ZM780 436H851V452H780Z" fill="#5cc0f2" />
          <path d="M780 337H852V382H780ZM780 389H852V436H780Z" fill="#9fdff8" />
          <path d="M780 338H850M780 434H850" stroke="#d4f6ff" stroke-width="2" />
          <path d="M838 285L852 288V382M852 389V484L838 489" fill="none" stroke="#a5ecff" stroke-width="2" />
        </svg>
        <div class="icons">
          <a class="item" href="#bin">${icon("bin", 48)}<span>Recycle Bin</span></a>
          <a class="item" href="#r3dfox">${icon("page", 48)}<span>r3dfox</span><span class="mark">${icon("overlay", 14)}</span></a>
          <a class="item" href="#download">${icon("picture", 48)}<span>download</span></a>
          <a class="item" href="#supermium">${icon("chromium", 48)}<span>Supermium</span><span class="mark">${icon("overlay", 14)}</span></a>
        </div>
        <explorer-window class="win"></explorer-window>
      </main>
      <footer class="task">
        <button class="start" aria-label="Start">${icon("winlogo", 28)}</button>
        <button class="app live" aria-label="File Explorer">${icon("explorer", 34)}</button>
        <button class="app" aria-label="Store">${icon("store", 30)}</button>
        <button class="app stack" aria-label="Supermium">${icon("chromium", 30)}</button>
        <button aria-label="Folder">${icon("taskfolder", 32)}</button>
        <span class="fill"></span>
        <div class="tray">${icon("flag")}${icon("traynet")}${icon("volume")}</div>
        <time class="clock">6:18 AM<br />12/1/2025</time>
      </footer>
    `;
  }
}
